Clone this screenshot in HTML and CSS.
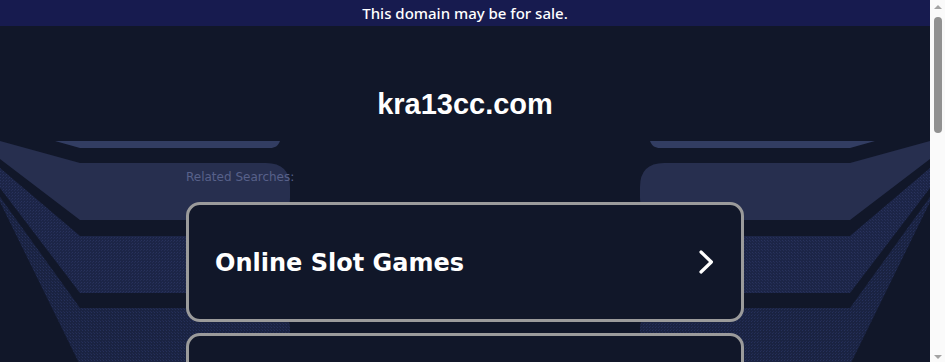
FILE: index.html
```html
<!DOCTYPE html>
<html lang="en">
<head>
<meta charset="utf-8">
<title>kra13cc.com</title>
<link rel="stylesheet" href="styles.css">
</head>
<body>
<div class="app">
  <div class="viewport">
    <svg class="deco" width="930" height="420" viewBox="0 0 930 420" aria-hidden="true">
      <defs>
        <pattern id="grain" width="3" height="3" patternUnits="userSpaceOnUse">
          <rect width="3" height="3" fill="#1c2547"/>
          <rect x="0" y="0" width="1" height="1" fill="#28325c"/>
          <rect x="2" y="1" width="1" height="1" fill="#242d55"/>
        </pattern>
        <pattern id="grain2" width="3" height="3" patternUnits="userSpaceOnUse">
          <rect width="3" height="3" fill="#1a2342"/>
          <rect x="1" y="0" width="1" height="1" fill="#25305a"/>
          <rect x="0" y="2" width="1" height="1" fill="#222b51"/>
        </pattern>
        <g id="side">
          <path d="M55 141 H280 C278 146 275 148 270 148 H80 Z" fill="#323d62"/>
          <path d="M0 141 L80 163 H266 Q290 163 290 187 V198 Q290 220 268 220 H80 L0 159 Z" fill="#272f4f"/>
          <path d="M0 168 L80 236 H268 Q290 236 290 258 V271 Q290 293 268 293 H80 L0 188 Z" fill="url(#grain)"/>
          <path d="M0 197 L80 308 H268 Q290 308 290 330 V420 H107 L0 202 Z" fill="url(#grain2)"/>
        </g>
      </defs>
      <use href="#side"/>
      <use href="#side" transform="matrix(-1 0 0 1 930 0)"/>
    </svg>

    <div class="topbar">This domain may be for sale.</div>

    <main class="content">
      <h1 class="domain">kra13cc.com</h1>
      <p class="label">Related Searches:</p>
      <ul class="links">
        <li class="card"><span class="card-text">Online Slot Games</span><svg class="chev" width="16" height="26" viewBox="0 0 16 26"><path d="M3 3 L13.4 13 L3 23" fill="none" stroke="#fff" stroke-width="3.2" stroke-linecap="round" stroke-linejoin="round"/></svg></li>
        <li class="card card-next"></li>
      </ul>
    </main>
  </div>

  <div class="scrollbar" aria-hidden="true">
    <div class="sb-btn"><span class="arrow-up"></span></div>
    <div class="sb-track"><div class="sb-thumb"></div></div>
    <div class="sb-btn"><span class="arrow-down"></span></div>
  </div>
</div>
</body>
</html>
```

FILE: styles.css
```css
html, body {
  margin: 0;
  padding: 0;
  background: #111729;
  overflow: hidden;
}

.app {
  display: flex;
  height: 362px;
}

.viewport {
  position: relative;
  flex: 1;
  height: 362px;
  overflow: hidden;
  background: #111729;
}

.deco {
  position: absolute;
  top: 0;
  left: 0;
  z-index: 0;
  display: block;
}

.topbar {
  position: relative;
  z-index: 1;
  height: 26px;
  background: #171b4f;
  color: #ffffff;
  font-family: "Noto Sans", "Open Sans", sans-serif;
  font-size: 15px;
  font-weight: 500;
  display: flex;
  align-items: center;
  justify-content: center;
}

.content {
  position: relative;
  z-index: 1;
  width: 558px;
  margin: 0 auto;
}

.domain {
  margin: 62px 0 0;
  font-family: "Liberation Sans", Arial, sans-serif;
  font-weight: 700;
  font-size: 29px;
  line-height: 33px;
  color: #ffffff;
  text-align: center;
}

.label {
  margin: 49px 0 17px;
  font-family: "DejaVu Sans", sans-serif;
  font-size: 12px;
  line-height: 15px;
  color: #58618a;
}

.links {
  list-style: none;
  margin: 0;
  padding: 0;
  display: flex;
  flex-direction: column;
  gap: 11px;
}

.card {
  box-sizing: border-box;
  height: 120px;
  border: 3px solid #9b9b9b;
  border-radius: 14px;
  background: #111729;
  display: flex;
  align-items: center;
  justify-content: space-between;
  padding: 2px 27px 0 26px;
}

.card-text {
  font-family: "DejaVu Sans", Verdana, sans-serif;
  font-weight: 700;
  font-size: 24px;
  color: #ffffff;
}

.chev {
  display: block;
  flex: none;
  margin-top: -2px;
}

.scrollbar {
  width: 15px;
  flex: none;
  height: 362px;
  background: #fafafa;
  display: flex;
  flex-direction: column;
}

.sb-btn {
  height: 15px;
  display: flex;
  align-items: center;
  justify-content: center;
  flex: none;
}

.arrow-up {
  width: 0;
  height: 0;
  border-left: 4px solid transparent;
  border-right: 4px solid transparent;
  border-bottom: 4px solid #a3a3a3;
  margin: 0 0 1px 1px;
}

.arrow-down {
  width: 0;
  height: 0;
  border-left: 4px solid transparent;
  border-right: 4px solid transparent;
  border-top: 4px solid #a3a3a3;
  margin: 4px 0 0 1px;
}

.sb-track {
  flex: 1;
  padding: 2px 3px 0 4px;
}

.sb-thumb {
  height: 116px;
  border-radius: 4px;
  background: #919191;
}
```
